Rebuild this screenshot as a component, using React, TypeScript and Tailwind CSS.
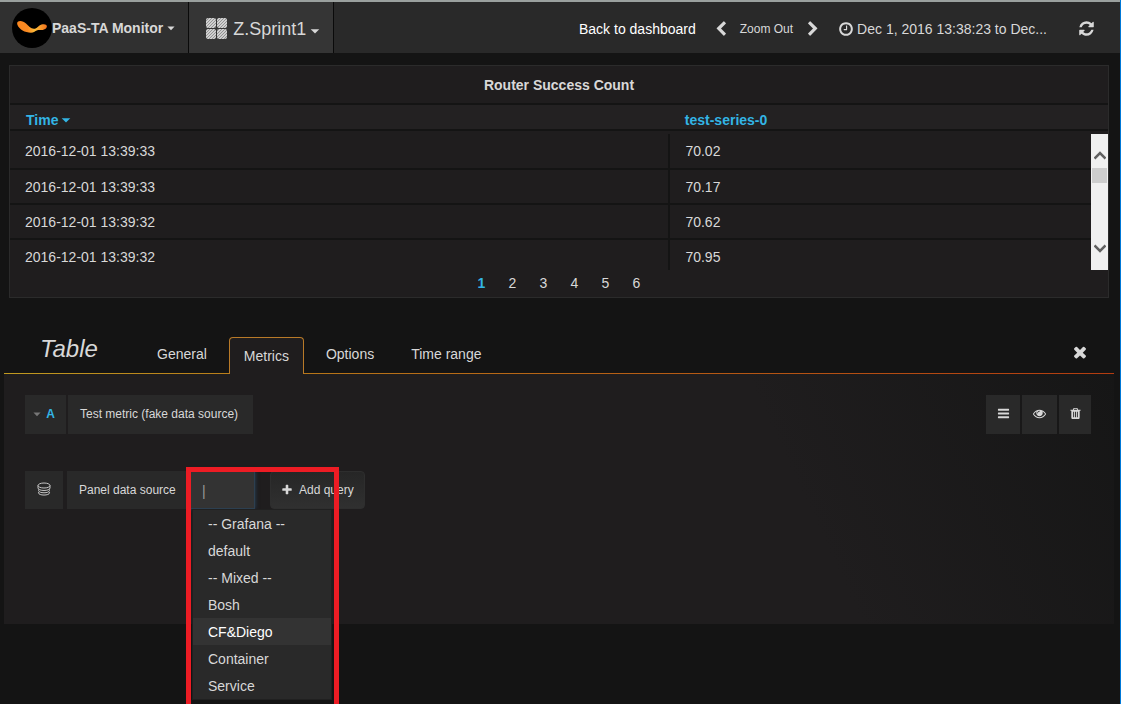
import React from "react";

const paths = {
  left: "M1427 301l-531 531 531 531q19 19 19 45t-19 45l-166 166q-19 19-45 19t-45-19l-742-742q-19-19-19-45t19-45l742-742q19-19 45-19t45 19l166 166q19 19 19 45t-19 45z",
  right: "M1363 877l-742 742q-19 19-45 19t-45-19l-166-166q-19-19-19-45t19-45l531-531-531-531q-19-19-19-45t19-45l166-166q19-19 45-19t45 19l742 742q19 19 19 45t-19 45z",
  clock: "M1024 544v448q0 14-9 23t-23 9h-320q-14 0-23-9t-9-23v-64q0-14 9-23t23-9h224v-352q0-14 9-23t23-9h64q14 0 23 9t9 23zm416 352q0-148-73-273t-198-198-273-73-273 73-198 198-73 273 73 273 198 198 273 73 273-73 198-198 73-273zm224 0q0 209-103 385.5t-279.5 279.5-385.5 103-385.5-103-279.5-279.5-103-385.5 103-385.5 279.5-279.5 385.5-103 385.5 103 279.5 279.5 103 385.5z",
  refresh: "M1639 1056q0 5-1 7-64 268-268 434.5t-478 166.5q-146 0-282.5-55t-243.5-157l-129 129q-19 19-45 19t-45-19-19-45v-448q0-26 19-45t45-19h448q26 0 45 19t19 45-19 45l-137 137q71 66 161 102t187 36q134 0 250-65t186-179q11-17 53-117 8-23 30-23h192q13 0 22.5 9.5t9.5 22.5zm25-800v448q0 26-19 45t-45 19h-448q-26 0-45-19t-19-45 19-45l138-138q-148-137-349-137-134 0-250 65t-186 179q-11 17-53 117-8 23-30 23h-199q-13 0-22.5-9.5t-9.5-22.5v-7q65-268 270-434.5t480-166.5q146 0 284 55.5t245 156.5l130-129q19-19 45-19t45 19 19 45z",
  close: "M1490 1322q0 40-28 68l-136 136q-28 28-68 28t-68-28l-294-294-294 294q-28 28-68 28t-68-28l-136-136q-28-28-28-68t28-68l294-294-294-294q-28-28-28-68t28-68l136-136q28-28 68-28t68 28l294 294 294-294q28-28 68-28t68 28l136 136q28 28 28 68t-28 68l-294 294 294 294q28 28 28 68z",
  plus: "M1600 736v192q0 40-28 68t-68 28h-416v416q0 40-28 68t-68 28h-192q-40 0-68-28t-28-68v-416h-416q-40 0-68-28t-28-68v-192q0-40 28-68t68-28h416v-416q0-40 28-68t68-28h192q40 0 68 28t28 68v416h416q40 0 68 28t28 68z",
  bars: "M1664 1344v128q0 26-19 45t-45 19h-1408q-26 0-45-19t-19-45v-128q0-26 19-45t45-19h1408q26 0 45 19t19 45zm0-512v128q0 26-19 45t-45 19h-1408q-26 0-45-19t-19-45v-128q0-26 19-45t45-19h1408q26 0 45 19t19 45zm0-512v128q0 26-19 45t-45 19h-1408q-26 0-45-19t-19-45v-128q0-26 19-45t45-19h1408q26 0 45 19t19 45z",
  eye: "M1664 960q-152-236-381-353 61 104 61 225 0 185-131.5 316.5t-316.5 131.5-316.5-131.5-131.5-316.5q0-121 61-225-229 117-381 353 133 205 333.5 326.5t434.5 121.5 434.5-121.5 333.5-326.5zm-720-384q0-20-14-34t-34-14q-125 0-214.5 89.5t-89.5 214.5q0 20 14 34t34 14 34-14 14-34q0-86 61-147t147-61q20 0 34-14t14-34zm848 384q0 34-20 69-140 230-376.5 368.5t-499.5 138.5-499.5-139-376.5-368q-20-35-20-69t20-69q140-229 376.5-368t499.5-139 499.5 139 376.5 368q20 35 20 69z",
  trash: "M704 1376v-704q0-14-9-23t-23-9h-64q-14 0-23 9t-9 23v704q0 14 9 23t23 9h64q14 0 23-9t9-23zm256 0v-704q0-14-9-23t-23-9h-64q-14 0-23 9t-9 23v704q0 14 9 23t23 9h64q14 0 23-9t9-23zm256 0v-704q0-14-9-23t-23-9h-64q-14 0-23 9t-9 23v704q0 14 9 23t23 9h64q14 0 23-9t9-23zm-544-992h448l-48-117q-7-9-17-11h-317q-10 2-17 11zm928 32v64q0 14-9 23t-23 9h-96v948q0 83-47 143.5t-113 60.5h-832q-66 0-113-58.5t-47-141.5v-952h-96q-14 0-23-9t-9-23v-64q0-14 9-23t23-9h309l70-167q15-37 54-63t79-26h320q40 0 79 26t54 63l70 167h309q14 0 23 9t9 23z",
  caret: "M256 640h1280l-640 640z",
};

function Icon({ name, className }: { name: keyof typeof paths; className: string }) {
  return (
    <svg viewBox="0 0 1792 1792" fill="currentColor" aria-hidden="true" className={`shrink-0 ${className}`}>
      <path d={paths[name]} />
    </svg>
  );
}

function Logo() {
  return (
    <svg viewBox="0 0 40 40" aria-hidden="true" className="size-10 shrink-0">
      <defs>
        <linearGradient id="logo" x1="0" y1="0" x2="1" y2="0">
          <stop offset="0" stopColor="#f9861f" />
          <stop offset="0.35" stopColor="#fa8a22" />
          <stop offset="0.6" stopColor="#fdbe3a" />
          <stop offset="1" stopColor="#f0701c" />
        </linearGradient>
      </defs>
      <circle cx="20" cy="20" r="20" fill="#000" />
      <path
        d="M5.5 14C7.5 12 11.5 13 14 15.5C16.5 18 18.5 20.5 22 20.8C25 20.8 26.5 17.5 29.5 16.5C33 15.4 35.5 17 34.8 19C34 21.5 30.5 22.4 27.5 22C25.5 22 24 22.6 22.5 23.8C20.5 25.2 17.5 25 14.5 24C11.5 23.4 9.5 22 7.5 20C5.5 18 4.5 15.5 5.5 14Z"
        fill="url(#logo)"
      />
    </svg>
  );
}

function GridIcon() {
  return (
    <svg viewBox="0 0 21 21" aria-hidden="true" className="size-[21px] shrink-0">
      <defs>
        <pattern id="hatch" width="3" height="3" patternUnits="userSpaceOnUse">
          <rect width="3" height="3" fill="#d0d0d0" />
          <path d="M-1 1L1 -1M0 3L3 0M2 4L4 2" stroke="#8c8c8c" strokeWidth="0.9" />
        </pattern>
      </defs>
      <g fill="url(#hatch)">
        <rect width="10" height="10" rx="2" />
        <rect x="11" width="10" height="10" rx="2" />
        <rect y="11" width="10" height="10" rx="2" />
        <rect x="11" y="11" width="10" height="10" rx="2" />
      </g>
    </svg>
  );
}

function DatabaseIcon() {
  return (
    <svg viewBox="0 0 14 14" fill="none" stroke="#c4c4c4" aria-hidden="true" className="size-3.5">
      <ellipse cx="7" cy="3.5" rx="6" ry="2.5" />
      <path d="M1 3.5v2.5c0 3.3 12 3.3 12 0V3.5M1.5 7.5v1c0 3 11 3 11 0v-1M1.5 10v.8c0 3 11 3 11 0V10" />
    </svg>
  );
}

const rows = [
  ["2016-12-01 13:39:33", "70.02"],
  ["2016-12-01 13:39:33", "70.17"],
  ["2016-12-01 13:39:32", "70.62"],
  ["2016-12-01 13:39:32", "70.95"],
];
const options = ["-- Grafana --", "default", "-- Mixed --", "Bosh", "CF&Diego", "Container", "Service"];

function Header() {
  return (
    <header className="flex h-[53px] items-stretch border-t-2 border-[#9aa09e] bg-[#292929]">
      <button className="flex items-center border-r border-[#0a0a0a] bg-[#303030] px-3 text-sm font-bold">
        <Logo />
        <span>PaaS-TA Monitor</span>
        <Icon name="caret" className="ml-[3px] size-2.5" />
      </button>
      <button className="flex items-center border-r border-[#0a0a0a] bg-[#353535] pl-[17px] pr-3 pt-0.5 text-lg">
        <GridIcon />
        <span className="ml-1.5">Z.Sprint1</span>
        <Icon name="caret" className="ml-[3px] mt-1 size-3" />
      </button>
      <nav className="ml-auto flex items-center pr-[25px] pt-0.5 text-sm">
        <a href="#dashboard" className="text-white">Back to dashboard</a>
        <button aria-label="Earlier" className="ml-[17px]"><Icon name="left" className="size-4" /></button>
        <button className="ml-[11px] text-xs">Zoom Out</button>
        <button aria-label="Later" className="ml-3"><Icon name="right" className="size-4" /></button>
        <button className="ml-[17px] flex items-center gap-[3px]">
          <Icon name="clock" className="size-4" />
          <span>Dec 1, 2016 13:38:23 to Dec...</span>
        </button>
        <button aria-label="Refresh" className="ml-[31px]"><Icon name="refresh" className="size-[17px]" /></button>
      </nav>
    </header>
  );
}

function ScrollBar() {
  return (
    <div className="flex w-[17px] shrink-0 flex-col items-center bg-[#f0f0f0] pt-4 pb-4">
      <svg viewBox="0 0 12 10" className="h-2.5 w-3" fill="none" stroke="#606060" strokeWidth="2.5" aria-hidden="true"><path d="M0.5 8.5l5.5-5.5 5.5 5.5" /></svg>
      <div className="mt-2 h-[15px] w-[15px] bg-[#cdcdcd]" />
      <svg viewBox="0 0 12 10" className="mt-auto h-2.5 w-3" fill="none" stroke="#606060" strokeWidth="2.5" aria-hidden="true"><path d="M0.5 1.5l5.5 5.5 5.5-5.5" /></svg>
    </div>
  );
}

function TablePanel() {
  return (
    <section className="ml-[9px] mr-[11px] mt-3 border border-[#2b2b2b] bg-[#1f1d1e]">
      <h2 className="flex h-[37px] items-center justify-center text-sm font-bold">Router Success Count</h2>
      <div className="flex h-7 items-center border-y-2 border-[#141414] bg-[#232122] text-sm font-bold text-[#33b5e5]">
        <button className="flex w-3/5 items-center gap-0.5 pl-4 pt-1.5">Time <Icon name="caret" className="size-3" /></button>
        <button className="w-2/5 pl-4 pt-1.5 text-left">test-series-0</button>
      </div>
      <div className="flex h-[139px] pt-[3px]">
        <div className="h-[136px] min-w-0 flex-1 overflow-hidden">
          <table className="w-full table-fixed border-collapse text-sm">
            <colgroup><col className="w-[61%]" /><col /></colgroup>
            <tbody>
              {rows.map(([time, value], i) => (
                <tr key={i} className="h-[35px] border-b-2 border-[#141414] last:border-b-0">
                  <td className="border-r-2 border-[#141414] pl-[15px]">{time}</td>
                  <td className="pl-[15px]">{value}</td>
                </tr>
              ))}
            </tbody>
          </table>
        </div>
        <ScrollBar />
      </div>
      <nav aria-label="Pages" className="flex h-[27px] items-center justify-center pb-0.5 text-sm">
        {[1, 2, 3, 4, 5, 6].map((n) => (
          <button key={n} className={n === 1 ? "w-[31px] font-bold text-[#33b5e5]" : "w-[31px]"}>{n}</button>
        ))}
      </nav>
    </section>
  );
}

function Tabs() {
  return (
    <div className="flex items-end bg-[linear-gradient(90deg,#c09a20,#b87818_25%,#b33c10)] pb-px">
      <div className="flex h-9 flex-1 items-center bg-[#141414]">
        <h1 className="ml-9 w-[101px] pb-3 text-2xl italic">Table</h1>
        <div role="tablist" className="flex h-9 items-center text-sm">
          <button role="tab" className="px-4 pb-0.5">General</button>
          <button role="tab" aria-selected="true" className="relative ml-1.5 h-[37px] self-start rounded-t border border-b-0 border-[#b87a28] bg-[#1f1d1e] px-3.5">Metrics</button>
          <button role="tab" className="ml-1.5 px-4 pb-0.5">Options</button>
          <button role="tab" className="ml-[5px] px-4 pb-0.5">Time range</button>
        </div>
        <button aria-label="Close" className="ml-auto mr-[25px] pb-1.5"><Icon name="close" className="size-[18px]" /></button>
      </div>
    </div>
  );
}

function DataSource() {
  return (
    <div className="mt-[37px] flex text-xs">
      <div className="flex h-[38px] w-[38px] items-center justify-center bg-[#292929] pb-0.5"><DatabaseIcon /></div>
      <label htmlFor="source" className="ml-1 flex h-[38px] w-[123px] items-center bg-[#292929] pl-3">Panel data source</label>
      <div className="relative">
        <input id="source" defaultValue="|" className="h-[38px] w-[65px] border border-[#2c3f50] bg-[#333] pl-[11px] pt-0.5 text-sm text-[#999] shadow-[0_0_4px_#29455f] outline-none" />
        <ul role="listbox" aria-label="Data sources" className="absolute left-0.5 top-[38px] z-10 w-[140px] border border-[#202020] bg-[#292929] text-sm">
          {options.map((o) => (
            <li key={o} role="option" aria-selected={o === "CF&Diego"} className={o === "CF&Diego" ? "flex h-[27px] items-center bg-[#333] pl-[15px] text-white" : "flex h-[27px] items-center pl-[15px]"}>{o}</li>
          ))}
        </ul>
        <div className="pointer-events-none absolute -left-1 -top-1 z-20 h-[260px] w-[153px] border-[5px] border-[#ed1c24]" />
      </div>
      <button className="ml-[15px] flex h-[38px] items-center gap-1.5 rounded-sm border border-[#2e2e2e] bg-linear-to-b from-[#262626] to-[#303030] px-2.5"><Icon name="plus" className="size-3" />Add query</button>
    </div>
  );
}

function Editor() {
  return (
    <section className="ml-1 mr-1.5 mt-[39px]">
      <Tabs />
      <div className="h-[250px] bg-[linear-gradient(65deg,#1f1d1e_70%,#161616)] pl-[21px] pr-[23px] pt-[21px]">
        <div className="flex text-xs">
          <button className="flex h-[39px] w-[41px] items-center justify-center gap-1 bg-[#292929] pb-0.5 pr-1 font-bold text-[#33b5e5]"><Icon name="caret" className="size-2.5 text-[#777]" />A</button>
          <div className="ml-0.5 flex h-[39px] items-center bg-[#292929] pl-3 pr-[15px] pb-0.5">Test metric (fake data source)</div>
          <div className="ml-auto flex gap-0.5">
            <button aria-label="Query menu" className="flex h-[39px] w-[34px] items-center justify-center bg-[#292929] pb-0.5"><Icon name="bars" className="size-[13px]" /></button>
            <button aria-label="Toggle query" className="flex h-[39px] w-[35px] items-center justify-center bg-[#292929] pb-0.5"><Icon name="eye" className="size-[13px]" /></button>
            <button aria-label="Remove query" className="flex h-[39px] w-8 items-center justify-center bg-[#292929] pb-0.5"><Icon name="trash" className="size-[13px]" /></button>
          </div>
        </div>
        <DataSource />
      </div>
    </section>
  );
}

export default function App() {
  return (
    <div className="min-h-screen overflow-hidden border-r border-[#0078d7] bg-[#141414] font-['Liberation_Sans',Arial,sans-serif] text-[#d8d8d8]">
      <Header />
      <main>
        <TablePanel />
        <Editor />
      </main>
    </div>
  );
}
